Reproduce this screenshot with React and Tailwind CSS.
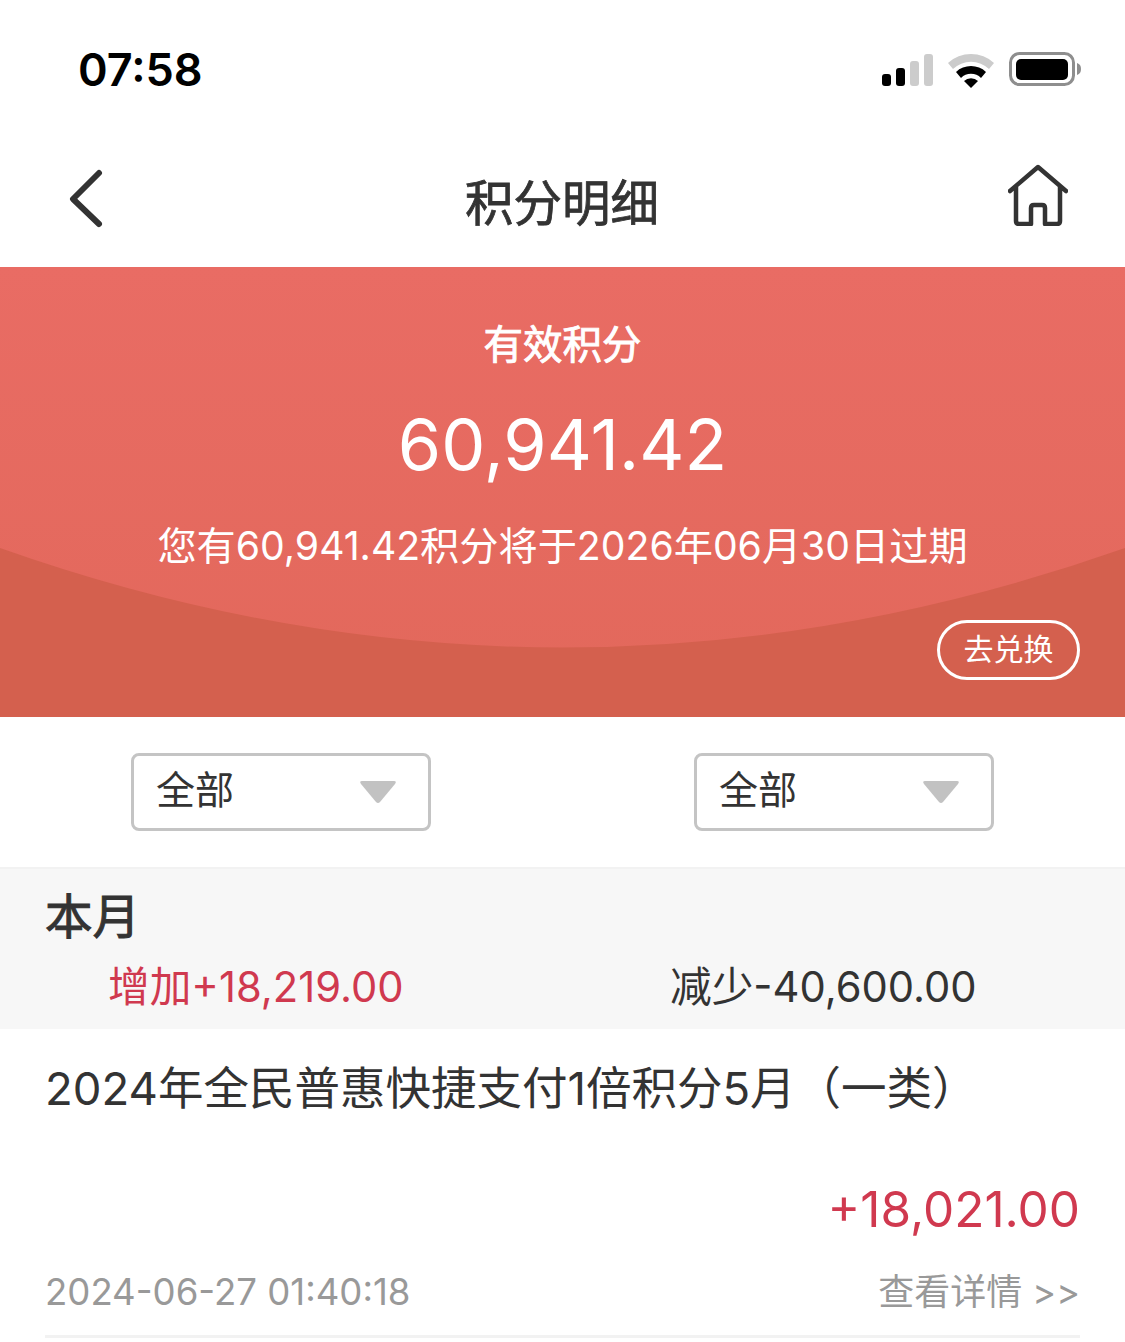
import React from 'react';

const font = { fontFamily: 'Inter, "Noto Sans CJK SC", sans-serif' };

function StatusIcons() {
  return (
    <svg width="200" height="36" viewBox="0 0 200 36" fill="none">
      <rect x="0" y="22" width="9" height="12" rx="3" fill="#000" />
      <rect x="14" y="16" width="9" height="18" rx="3" fill="#000" />
      <rect x="28" y="9" width="9" height="25" rx="3" fill="#ccc" />
      <rect x="42" y="2" width="9" height="32" rx="3" fill="#ccc" />
      <path d="M66 11 A 34 34 0 0 1 112 11 L 107 17 A 26 26 0 0 0 71 17 Z" fill="#ccc" />
      <path d="M74 20 A 22 22 0 0 1 104 20 L 99 26 A 14 14 0 0 0 79 26 Z" fill="#000" />
      <path d="M82 29 A 10 10 0 0 1 96 29 L 89 36 Z" fill="#000" />
      <rect x="128.5" y="1.5" width="63" height="31" rx="9" stroke="#8e8e8e" strokeWidth="3" />
      <rect x="134" y="7" width="52" height="21" rx="5" fill="#000" />
      <path d="M195 11 C198 12 199 14 199 17 C199 20 198 22 195 23 Z" fill="#8e8e8e" />
    </svg>
  );
}

function Select() {
  return (
    <div className="flex h-[78px] w-[300px] items-center justify-between rounded-[8px] border-[3px] border-[#c4c4c4] pl-[22px] pr-[31px] text-[39px] text-[#333]">
      <span className="mb-[3px]">全部</span>
      <svg width="38" height="24" viewBox="0 0 38 24">
        <path d="M3 1 H35 Q38 1 36 4 L21 22 Q19 24 17 22 L2 4 Q0 1 3 1 Z" fill="#c2c2c2" />
      </svg>
    </div>
  );
}

export default function App() {
  return (
    <div className="h-[1342px] w-[1125px] overflow-hidden bg-white" style={font}>
      <div className="flex h-[135px] items-start justify-between pl-[78px] pr-[43px] pt-[36px]">
        <span className="text-[45px] font-semibold leading-[68px] text-black">07:58</span>
        <div className="mt-[16px]">
          <StatusIcons />
        </div>
      </div>

      <div className="flex h-[132px] items-center justify-between pl-[69px] pr-[57px]">
        <div className="w-[47px]">
          <svg width="36" height="60" viewBox="0 0 36 60" fill="none" className="mb-[5px]">
            <path d="M30 4 L4 30 L30 55" stroke="#333" strokeWidth="6" strokeLinecap="round" strokeLinejoin="round" />
          </svg>
        </div>
        <h1 className="mt-[5px] text-[48.5px] leading-[60px] text-[#333] [-webkit-text-stroke:0.8px_#333]">积分明细</h1>
        <svg width="60" height="62" viewBox="0 0 60 62" fill="none" className="mb-[13px]">
          <path
            d="M2 27 L30 3 L58 27 M8 23 V57 Q8 60 11 60 H23 V44 Q23 41 26 41 H34 Q37 41 37 44 V60 H49 Q52 60 52 57 V23"
            stroke="#333"
            strokeWidth="4.5"
            strokeLinecap="round"
            strokeLinejoin="round"
          />
        </svg>
      </div>

      <div className="relative h-[450px] bg-gradient-to-b from-[#e96c64] to-[#e2685b] text-white">
        <svg className="absolute inset-0" width="1125" height="450" viewBox="0 0 1125 450">
          <path d="M0 281 Q562 480 1125 281 V450 H0 Z" fill="#d4604e" />
        </svg>
        <div className="relative flex flex-col items-center">
          <p className="mt-[53px] text-[39.5px] leading-[50px] [-webkit-text-stroke:0.9px_#fff]">有效积分</p>
          <p className="mt-[31px] text-[70px] leading-[88px]">60,941.42</p>
          <p className="mt-[29px] text-[39.2px] leading-[56px]">您有60,941.42积分将于2026年06月30日过期</p>
        </div>
        <div className="absolute bottom-[37px] right-[45px] flex h-[60px] w-[143px] items-center justify-center rounded-full border-[3px] border-white pb-[2px] text-[30px]">
          去兑换
        </div>
      </div>

      <div className="flex h-[150px] items-center justify-between pl-[131px] pr-[131px]">
        <Select />
        <Select />
      </div>

      <div className="h-[162px] border-t-[2px] border-[#f2f2f2] bg-[#f7f7f7] pl-[45px]">
        <p className="pt-[20px] text-[47.5px] leading-[56px] text-[#333] [-webkit-text-stroke:1px_#333]">本月</p>
        <div className="mt-[14px] flex text-[41.7px] leading-[56px]">
          <span className="ml-[63px] w-[562px] text-[#d0394f]">增加+18,219.00</span>
          <span className="text-[#333]">减少-40,600.00</span>
        </div>
      </div>

      <div className="px-[45px]">
        <p className="pt-[28px] text-[45.5px] leading-[64px] text-[#333]">2024年全民普惠快捷支付1倍积分5月（一类）</p>
        <p className="mt-[58px] text-right text-[49.5px] leading-[60px] text-[#d0394f]">+18,021.00</p>
        <div className="mt-[28px] flex items-center justify-between leading-[50px] text-[#999]">
          <span className="text-[36.6px]">2024-06-27 01:40:18</span>
          <span className="text-[36px]">查看详情 &gt;&gt;</span>
        </div>
        <div className="mt-[18px] h-[3px] bg-[#f2f2f2]" />
      </div>
    </div>
  );
}
